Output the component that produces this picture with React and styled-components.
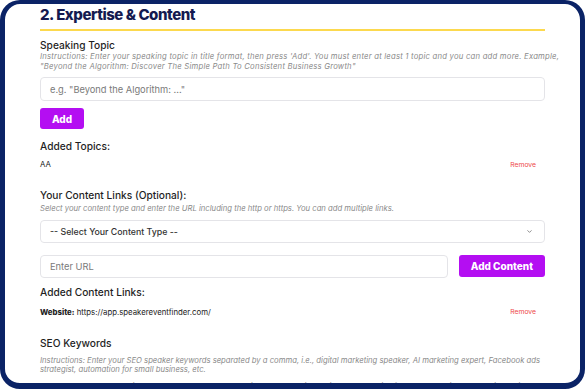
import React from 'react';
import styled, { createGlobalStyle } from 'styled-components';

const GlobalStyle = createGlobalStyle`
  html, body {
    margin: 0;
    padding: 0;
    background: #ffffff;
  }
  body {
    font-family: Inter, "Noto Sans", sans-serif;
  }
`;

const Frame = styled.div`
  box-sizing: border-box;
  width: 585px;
  height: 389px;
  border: 5px solid #0b2366;
  border-top-width: 4px;
  border-bottom-width: 6px;
  border-radius: 20px;
  overflow: hidden;
  background: #fff;
`;

const Content = styled.div`
  padding: 0 35px;
`;

const Title = styled.h2`
  margin: 0;
  font-size: 15px;
  font-weight: 800;
  line-height: 22px;
  color: #141a50;
  letter-spacing: -0.45px;
`;

const TitleRule = styled.div`
  height: 2px;
  margin-top: 3px;
  background: #fcd94e;
`;

const Section = styled.div`
  margin-top: ${(p) => p.$gap || 0}px;
`;

const Label = styled.div`
  font-size: 10.2px;
  font-weight: 500;
  line-height: 14px;
  color: #1f1f1f;
`;

const Hint = styled.div`
  margin-top: ${(p) => p.$gap || 0}px;
  font-size: 7.7px;
  line-height: 9.6px;
  font-style: italic;
  letter-spacing: ${(p) => p.$track || 0}px;
  white-space: nowrap;
  color: #8a8a8a;
`;

const Field = styled.div`
  box-sizing: border-box;
  display: flex;
  align-items: center;
  justify-content: space-between;
  flex: 1;
  height: ${(p) => p.$h || 23}px;
  padding: 0 11px 0 9px;
  border: 1px solid #e4e4e8;
  border-radius: 4px;
  font-size: ${(p) => (p.$filled ? 8.8 : 9.3)}px;
  color: ${(p) => (p.$filled ? '#333' : '#7a7a7a')};
  font-weight: ${(p) => (p.$filled ? 500 : 400)};
`;

const FieldRow = styled.div`
  display: flex;
  align-items: flex-start;
  gap: 11px;
  margin-top: ${(p) => p.$gap || 0}px;
`;

const Button = styled.button`
  box-sizing: border-box;
  height: ${(p) => p.$h || 22}px;
  padding: 0 12px;
  border: none;
  border-radius: 3px;
  background: #b40ef2;
  color: #fff;
  font-family: inherit;
  font-size: 10px;
  font-weight: 800;
  cursor: pointer;
`;

const ItemRow = styled.div`
  display: flex;
  align-items: center;
  justify-content: space-between;
  height: 10px;
  padding-right: 9px;
  margin-top: ${(p) => p.$gap || 0}px;
  font-size: 7.8px;
  color: #222;
`;

const Remove = styled.span`
  font-size: 6.8px;
  color: #ee4a4a;
`;

const Strong = styled.b`
  font-weight: 800;
`;

const Chevron = () => (
  <svg width="7" height="7" viewBox="0 0 24 24" fill="none" stroke="#666" strokeWidth="2.5" strokeLinecap="round" strokeLinejoin="round">
    <path d="M6 9l6 6 6-6" />
  </svg>
);

export default function App() {
  return (
    <>
      <GlobalStyle />
      <Frame>
        <Content>
          <Title>2. Expertise &amp; Content</Title>
          <TitleRule />

          <Section $gap={7}>
            <Label>Speaking Topic</Label>
            <Hint $gap={0} $track={0.22}>
              Instructions: Enter your speaking topic in title format, then press 'Add'. You must enter at least 1 topic and you can add more. Example,
              <br />
              "Beyond the Algorithm: Discover The Simple Path To Consistent Business Growth"
            </Hint>
          </Section>
          <FieldRow $gap={6}>
            <Field $h={24}>e.g. "Beyond the Algorithm: ..."</Field>
          </FieldRow>
          <FieldRow $gap={7}>
            <Button $h={21}>Add</Button>
          </FieldRow>

          <Section $gap={10}>
            <Label>Added Topics:</Label>
          </Section>
          <ItemRow $gap={6}>
            <span>AA</span>
            <Remove>Remove</Remove>
          </ItemRow>

          <Section $gap={19}>
            <Label>Your Content Links (Optional):</Label>
            <Hint $gap={1.5}>Select your content type and enter the URL including the http or https. You can add multiple links.</Hint>
          </Section>
          <FieldRow $gap={6.5}>
            <Field $filled>
              <span>-- Select Your Content Type --</span>
              <Chevron />
            </Field>
          </FieldRow>
          <FieldRow $gap={12}>
            <Field>Enter URL</Field>
            <Button>Add Content</Button>
          </FieldRow>

          <Section $gap={7.5}>
            <Label>Added Content Links:</Label>
          </Section>
          <ItemRow $gap={7.5}>
            <span>
              <Strong>Website:</Strong> https://app.speakereventfinder.com/
            </span>
            <Remove>Remove</Remove>
          </ItemRow>

          <Section $gap={19}>
            <Label>SEO Keywords</Label>
            <Hint $gap={6}>
              Instructions: Enter your SEO speaker keywords separated by a comma, i.e., digital marketing speaker, AI marketing expert, Facebook ads
              <br />
              strategist, automation for small business, etc.
            </Hint>
            <Hint $gap={7}>
              These should be your main SEO keywords that best describe your speaking topics and expertise for event organizers searching online.
            </Hint>
          </Section>
        </Content>
      </Frame>
    </>
  );
}
